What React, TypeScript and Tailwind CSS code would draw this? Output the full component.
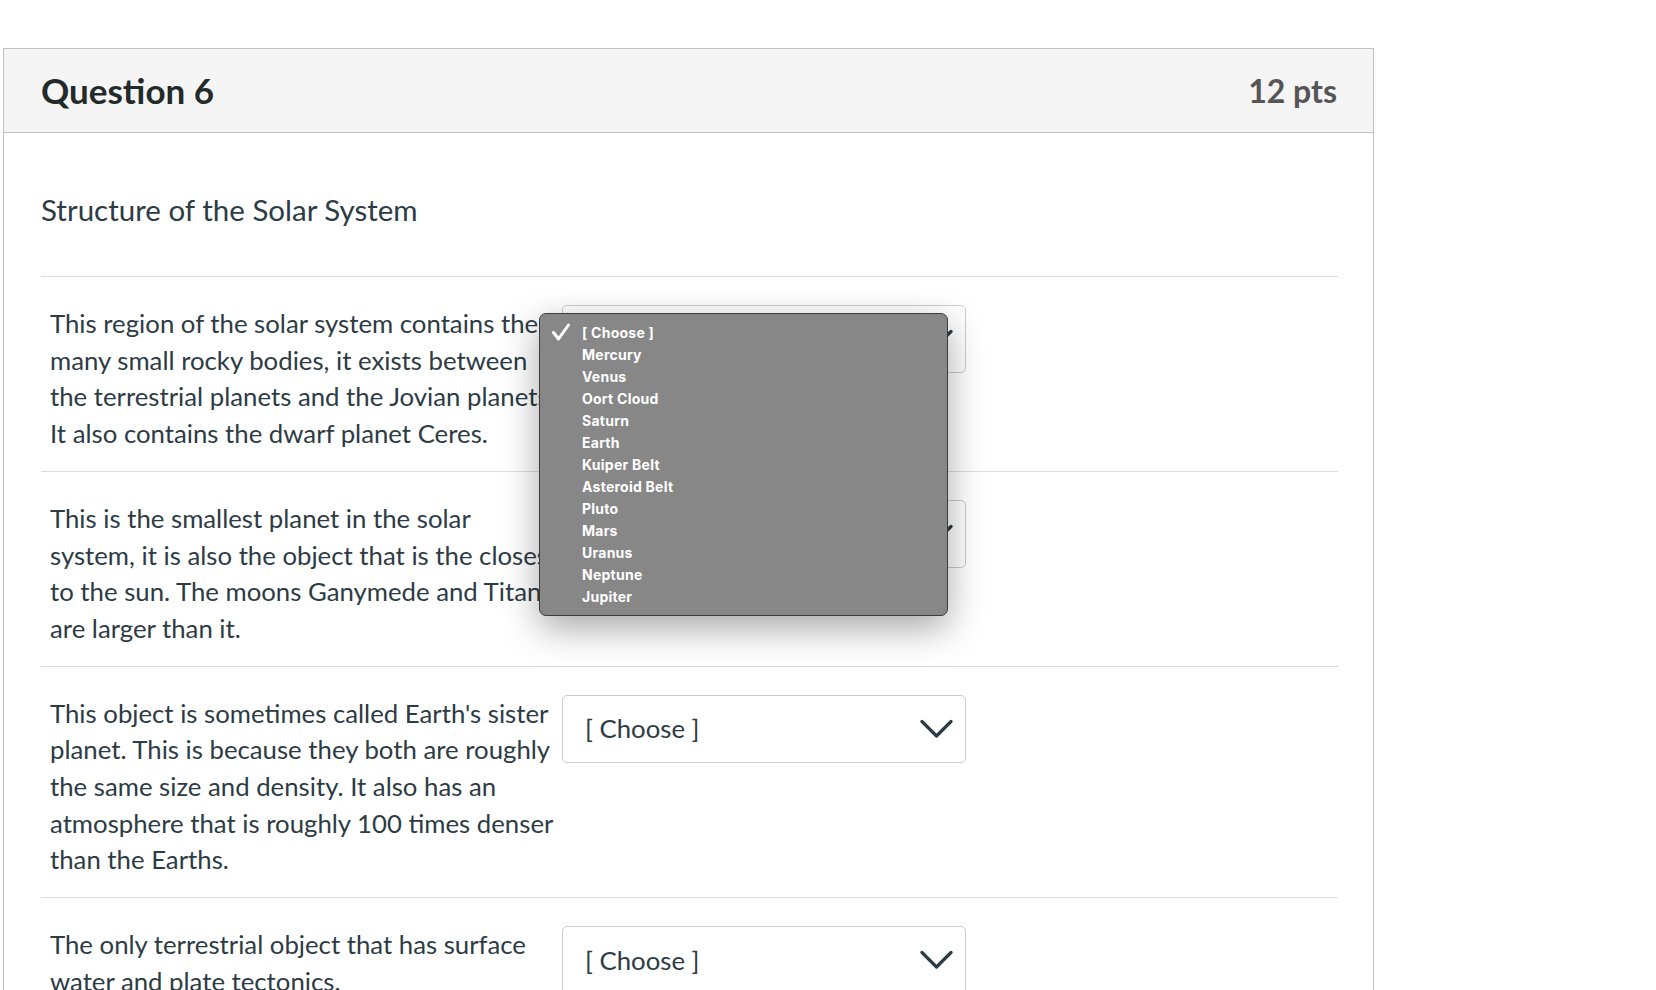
const items = [
  'This region of the solar system contains the many small rocky bodies, it exists between the terrestrial planets and the Jovian planets. It also contains the dwarf planet Ceres.',
  'This is the smallest planet in the solar system, it is also the object that is the closest to the sun. The moons Ganymede and Titan are larger than it.',
  "This object is sometimes called Earth's sister planet. This is because they both are roughly the same size and density. It also has an atmosphere that is roughly 100 times denser than the Earths.",
  'The only terrestrial object that has surface water and plate tectonics.',
]

const options = [
  '[ Choose ]',
  'Mercury',
  'Venus',
  'Oort Cloud',
  'Saturn',
  'Earth',
  'Kuiper Belt',
  'Asteroid Belt',
  'Pluto',
  'Mars',
  'Uranus',
  'Neptune',
  'Jupiter',
]

function Select() {
  return (
    <div className="flex items-center justify-between h-[68px] w-[404px] shrink-0 pl-[22px] pr-[12px] bg-white border border-[#c7cdd1] rounded-[5px] text-[25.75px] text-[#2d3b45]">
      <span>[ Choose ]</span>
      <svg width="33" height="20" viewBox="0 0 33 20" fill="none">
        <path d="M2 2.5 L16.5 17 L31 2.5" stroke="#2d3b45" strokeWidth="3.2" strokeLinecap="round" strokeLinejoin="round" />
      </svg>
    </div>
  )
}

function Popup() {
  return (
    <div
      className="absolute left-[535px] top-[264px] w-[409px] h-[303px] pt-[7px] rounded-[7px] bg-[#878787] border border-[#3d3d3d] shadow-[0_12px_36px_rgba(0,0,0,0.35)] text-white text-[14px] tracking-[0.25px] font-bold"
      style={{ fontFamily: 'Inter, "Liberation Sans", sans-serif' }}
    >
      {options.map((o, i) => (
        <div key={o} className="flex items-center h-[22px]">
          <div className="w-[42px] pl-[11px] flex items-center">
            {i === 0 && (
              <svg width="20" height="18" viewBox="0 0 20 18" fill="none">
                <path d="M2.5 9.5 L7.5 16 L17.5 2" stroke="white" strokeWidth="3" strokeLinecap="round" strokeLinejoin="round" />
              </svg>
            )}
          </div>
          <span>{o}</span>
        </div>
      ))}
    </div>
  )
}

export default function App() {
  return (
    <div
      className="min-h-screen bg-white pt-[48px] pl-[3px] text-[#2d3b45]"
      style={{ fontFamily: 'Lato, "Liberation Sans", sans-serif' }}
    >
      <div className="relative w-[1371px] border border-[#c2c2c2]">
        <div className="flex items-center justify-between h-[84px] pl-[37px] pr-[36px] bg-[#f5f5f5] border-b border-[#c2c2c2]">
          <h2 className="text-[35px] font-bold text-[#222a2a]">Question 6</h2>
          <span className="text-[32px] font-bold text-[#555]">12 pts</span>
        </div>

        <div className="pl-[37px] pr-[35px] pt-[54px]">
          <p className="text-[29.5px] leading-[45px] mb-[44px] text-[#2d3b45]">Structure of the Solar System</p>

          {items.map((t) => (
            <div key={t} className="flex border-t border-[#dcdcdc] pt-[28px] pb-[19px]">
              <p className="w-[521px] shrink-0 pl-[9px] pr-[2px] text-[25.75px] leading-[36.7px]">{t}</p>
              <Select />
            </div>
          ))}
        </div>

        <Popup />
      </div>
    </div>
  )
}
